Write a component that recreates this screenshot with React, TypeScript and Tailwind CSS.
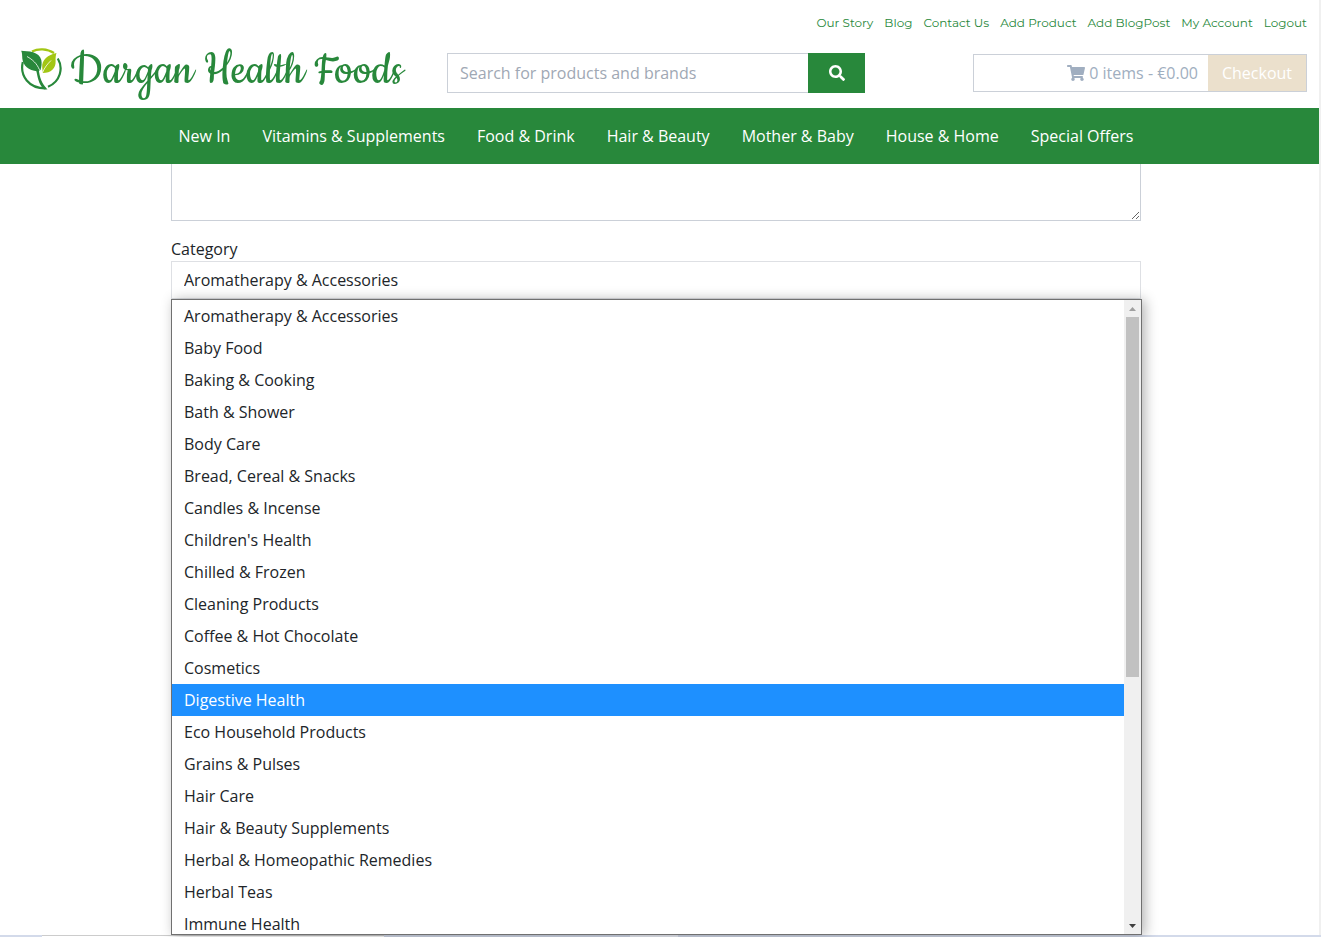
import { FaSearch, FaShoppingCart } from "react-icons/fa";

const accountLinks = ["Our Story", "Blog", "Contact Us", "Add Product", "Add BlogPost", "My Account", "Logout"];

const sections = [
  "New In",
  "Vitamins & Supplements",
  "Food & Drink",
  "Hair & Beauty",
  "Mother & Baby",
  "House & Home",
  "Special Offers",
];

const categories = [
  "Aromatherapy & Accessories",
  "Baby Food",
  "Baking & Cooking",
  "Bath & Shower",
  "Body Care",
  "Bread, Cereal & Snacks",
  "Candles & Incense",
  "Children's Health",
  "Chilled & Frozen",
  "Cleaning Products",
  "Coffee & Hot Chocolate",
  "Cosmetics",
  "Digestive Health",
  "Eco Household Products",
  "Grains & Pulses",
  "Hair Care",
  "Hair & Beauty Supplements",
  "Herbal & Homeopathic Remedies",
  "Herbal Teas",
  "Immune Health",
];

const highlighted = "Digestive Health";

function LeafMark() {
  return (
    <svg viewBox="0 0 42 42" className="size-[42px] shrink-0" aria-hidden="true">
      <g fill="none" strokeWidth="2.2">
        <path d="M12 3.400C18 .4 27 .4 34 5" stroke="#a2c614" />
        <path d="M2.800 14C-.5 28 9 40.400 25.500 40.400" stroke="#28883b" />
        <path d="M37.800 10.500C43.500 20 40.500 33.500 28 38.800" stroke="#28883b" />
      </g>
      <path d="M1.200 2.800C8 3.200 19.500 3.500 21.300 12C22 15.500 21.600 18.500 20.500 22L17.500 23.200C8.500 22.700 3 17.500 2.300 10.500C2.100 7.500 2.200 5 1.200 2.800Z" fill="#28883b" />
      <path d="M7 8.500C12.500 11.500 17 15.500 19.500 22" fill="none" stroke="#ffffff" strokeWidth=".8" />
      <path d="M16 22L18.800 21C19.300 29 22 36 27.500 41.500L23.800 41.200C18 35.500 18 29 16 22Z" fill="#28883b" />
      <path d="M36.500 5C28 7 21.500 11.500 22.200 19.500L22.800 25C31 25 36 20.500 35.600 13C35.500 9.500 35.700 7.500 36.500 5Z" fill="#a2c614" />
      <path d="M22.600 24.500C24.500 19.500 27.500 16 31 12.500" fill="none" stroke="#ffffff" strokeWidth=".8" />
    </svg>
  );
}

function Header() {
  return (
    <header className="shrink-0">
      <div className="flex h-[108px] flex-col pr-3 pl-5">
        <nav aria-label="Account" className="flex h-11 items-center justify-end gap-[11px] pt-px font-['Montserrat','Inter',sans-serif] text-[12px] font-normal text-[#28883b]">
          {accountLinks.map((label) => (
            <a key={label} href="#">
              {label}
            </a>
          ))}
        </nav>
        <div className="flex items-center pt-1">
          <a href="#" aria-label="Dargan Health Foods" className="flex h-[50px] w-[427px] shrink-0 gap-2 text-[#28883b]">
            <LeafMark />
            <span className="font-['Cookie','Courgette',cursive] text-[51px] leading-[46px] whitespace-nowrap">
              Dargan Health Foods
            </span>
          </a>
          <form role="search" className="flex h-10 w-[418px] shrink-0">
            <input
              type="search"
              aria-label="Search for products and brands"
              placeholder="Search for products and brands"
              className="min-w-0 flex-1 border border-r-0 border-[#cbd0d8] px-3 placeholder:text-[#a0a8b4]"
            />
            <button type="button" aria-label="Search" className="flex w-[57px] items-center justify-center bg-[#28883b] text-white">
              <FaSearch />
            </button>
          </form>
          <div className="ml-auto flex h-[38px] w-[334px] border border-[#cbd0d8]">
            <a href="#" className="flex flex-1 items-center justify-end gap-1 pr-[10px] text-[#a0aec0]">
              <FaShoppingCart className="size-[18px]" />
              0 items - €0.00
            </a>
            <button type="button" className="w-[98px] bg-[#ebe0cc] text-white">
              Checkout
            </button>
          </div>
        </div>
      </div>
      <nav aria-label="Shop" className="flex h-14 items-center justify-center gap-8 bg-[#28883b] pr-[7px] text-white">
        {sections.map((label) => (
          <a key={label} href="#" className="whitespace-nowrap">
            {label}
          </a>
        ))}
      </nav>
    </header>
  );
}

function CategoryMenu() {
  return (
    <div className="absolute top-full -right-px left-0 flex h-[636px] overflow-hidden border border-[#707070] bg-white shadow-[3px_1px_12px_rgba(0,0,0,0.3)]">
      <ul role="listbox" aria-label="Category options" className="flex-1">
        {categories.map((name) => (
          <li
            key={name}
            role="option"
            aria-selected={name === highlighted}
            className={
              name === highlighted
                ? "h-8 bg-[#1e90ff] px-3 leading-8 text-white"
                : "h-8 px-3 leading-8 text-[#212529]"
            }
          >
            {name}
          </li>
        ))}
      </ul>
      <div className="flex w-[17px] flex-col items-center bg-[#f0f0f0]" aria-hidden="true">
        <div className="flex h-[17px] shrink-0 items-center">
          <svg viewBox="0 0 7 4" className="h-1 w-[7px]">
            <path d="M3.500 0L7 4H0Z" fill="#a0a0a0" />
          </svg>
        </div>
        <div className="h-[360px] w-[13px] bg-[#c1c1c1]" />
        <div className="mt-auto flex h-[17px] shrink-0 items-center">
          <svg viewBox="0 0 7 4" className="h-1 w-[7px]">
            <path d="M0 0H7L3.500 4Z" fill="#404040" />
          </svg>
        </div>
      </div>
    </div>
  );
}

export default function App() {
  return (
    <div className="flex h-screen flex-col overflow-hidden bg-white font-['Open_Sans',sans-serif] text-base text-[#212529]">
      <div className="flex min-h-0 flex-1 flex-col border-r-2 border-[#f0f0f0]">
        <Header />
        <main className="min-h-0 flex-1 pr-[7px]">
          <form className="mx-auto w-full max-w-[970px]">
            <textarea
              aria-label="Description"
              className="block h-[57px] w-full border border-t-0 border-[#cbd0d8] px-3"
            />
            <label htmlFor="category" className="mt-4 block leading-6">
              Category
            </label>
            <div className="relative z-10">
              <select id="category" className="block h-[38px] w-full appearance-none border border-[#dee0e4] bg-white px-3">
                {categories.map((name) => (
                  <option key={name}>{name}</option>
                ))}
              </select>
              <CategoryMenu />
            </div>
          </form>
        </main>
      </div>
      <div className="flex h-[2px] shrink-0 bg-[#d3daea]" aria-hidden="true">
        <div className="ml-[42px] w-[342px] border-t border-[#cccccc] bg-white" />
        <div className="ml-[246px] w-12 bg-[#eceff7]" />
      </div>
    </div>
  );
}
